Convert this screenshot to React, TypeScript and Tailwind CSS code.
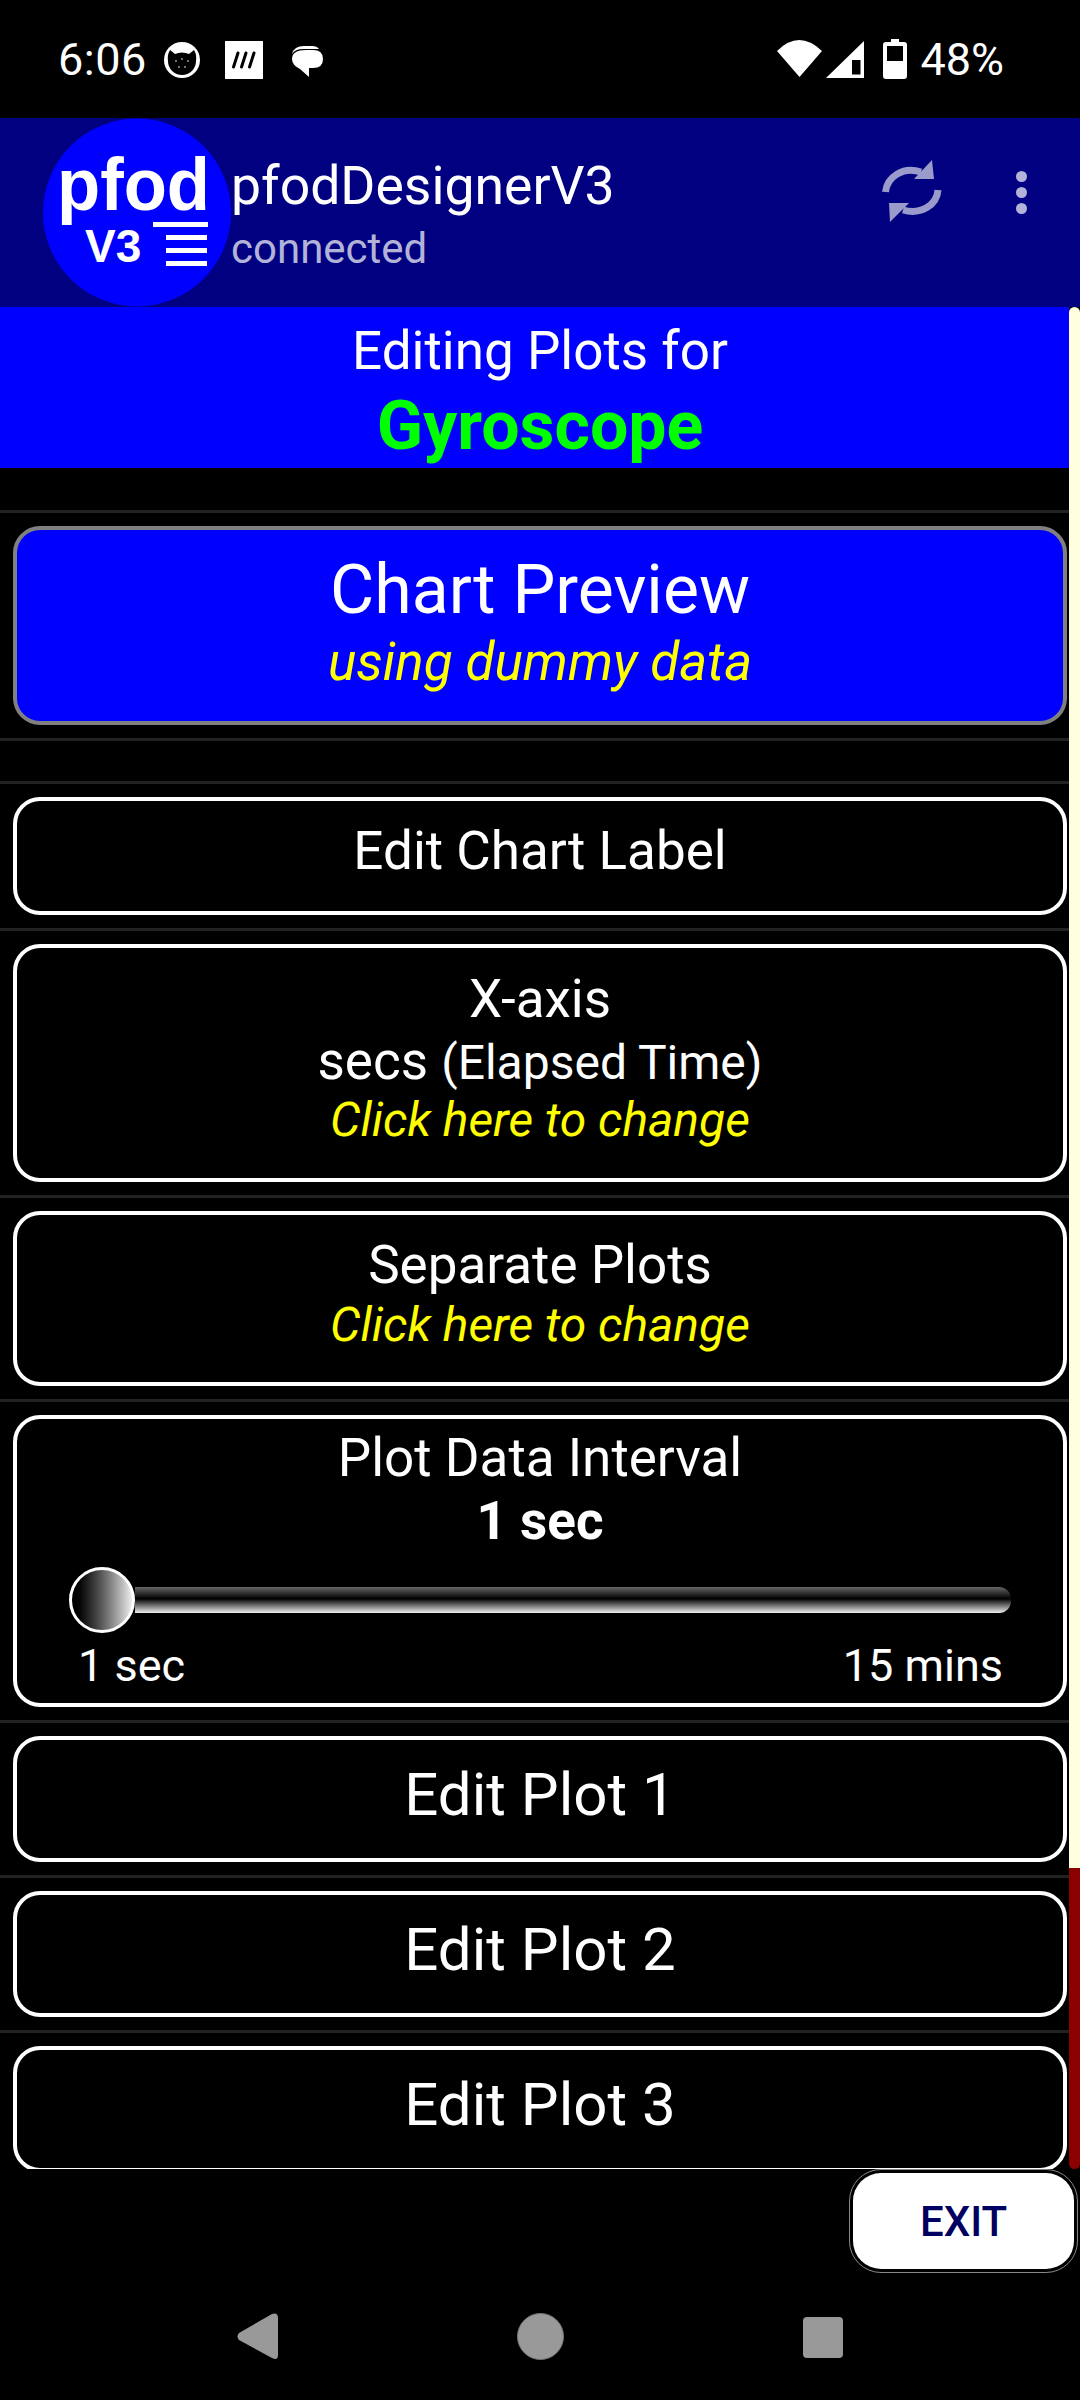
import type { ReactNode } from 'react';

const roboto = 'font-["Roboto",sans-serif]';

function StatusBar(): JSX.Element {
  return (
    <div className={`flex h-[118px] items-start bg-black pl-[58px] pr-[76px] pt-[37px] text-white ${roboto}`}>
      <span className="w-[86px] text-[45px] leading-[46px] tracking-[0.5px]">6:06</span>
      {/* cat face notification */}
      <svg className="ml-[20px] mt-[5px]" width="36" height="36" viewBox="0 0 36 36">
        <circle cx="18" cy="18" r="18" fill="#fff" />
        <path d="M6 8 L11 12 Q18 9 25 12 L30 8 Q33 13 32 19 A14 14 0 0 1 4 19 Q3 13 6 8 Z" fill="#000" />
        <circle cx="12" cy="19" r="1" fill="#999" />
        <circle cx="18" cy="17" r="1" fill="#999" />
        <circle cx="24" cy="19" r="1" fill="#999" />
        <circle cx="15" cy="25" r="1" fill="#999" />
        <circle cx="21" cy="25" r="1" fill="#999" />
      </svg>
      <svg className="ml-[25px] mt-[4px]" width="38" height="38" viewBox="0 0 38 38">
        <rect width="38" height="38" fill="#fff" />
        <path d="M13 12 L8.500 26 M21 12 L16.500 26 M29 12 L24.500 26" stroke="#000" strokeWidth="3" strokeLinecap="round" />
      </svg>
      <svg className="ml-[27px] mt-[8px]" width="33" height="33" viewBox="0 0 33 33">
        <path d="M2 9 Q4 1 14 1 H22 Q27 1 29 4 H13 Q5 4 2 9 Z" fill="#fff" />
        <path d="M16 5 H23 Q33 5 33 14 Q33 23 23 23 H19 V32 L10 24 Q2 20 2 14 Q2 5 16 5 Z" fill="#fff" />
      </svg>
      <div className="ml-auto flex items-start">
        <svg className="mt-[3px]" width="45" height="37" viewBox="0 0 45 37">
          <path d="M0 11 Q22 -11 45 11 L22.500 37 Z" fill="#fff" />
        </svg>
        <svg className="ml-[4px] mt-[4px]" width="38" height="37" viewBox="0 0 38 37">
          <path d="M38 0 V37 H0 Z" fill="#fff" />
          <path d="M26 19 H34.500 V33.500 H26 Z" fill="#000" />
        </svg>
        <svg className="ml-[19px] mt-[2px]" width="24" height="40" viewBox="0 0 24 40">
          <path d="M8 0 H16 V3 H21 Q24 3 24 6 V37 Q24 40 21 40 H3 Q0 40 0 37 V6 Q0 3 3 3 H8 Z" fill="#fff" />
          <rect x="4" y="7" width="16" height="15" fill="#000" />
        </svg>
        <span className="ml-[13px] text-[45px] leading-[46px]">48%</span>
      </div>
    </div>
  );
}

function Logo(): JSX.Element {
  return (
    <svg className="shrink-0" width="188" height="189" viewBox="0 0 188 189">
      <circle cx="94" cy="94.500" r="94" fill="#0000ff" />
      <text x="14" y="92" fill="#fff" fontFamily="Liberation Sans" fontWeight="700" fontSize="74" textLength="153" lengthAdjust="spacingAndGlyphs">
        pfod
      </text>
      <text x="42" y="144" fill="#fff" fontFamily="Liberation Sans" fontWeight="700" fontSize="46">
        V3
      </text>
      <rect x="110" y="104" width="55" height="5" fill="#fff" />
      <rect x="123" y="117" width="41" height="5" fill="#fff" />
      <rect x="123" y="130" width="41" height="5" fill="#fff" />
      <rect x="123" y="143" width="41" height="5" fill="#fff" />
    </svg>
  );
}

function AppBar(): JSX.Element {
  return (
    <div className={`flex h-[189px] items-start bg-[#000080] pl-[43px] ${roboto}`}>
      <Logo />
      <div className="flex flex-col pt-[37px]">
        <span className="text-[53.500px] leading-[62px] text-white">pfodDesignerV3</span>
        <span className="mt-[7px] text-[42px] leading-[50px] text-[#b3b3d9]">connected</span>
      </div>
      <svg className="ml-auto mt-[42px]" width="60" height="63" viewBox="0 0 60 63" fill="none">
        <path d="M3.500 32 C5 17 21 6 39 12" stroke="#9a9acb" strokeWidth="7" />
        <path d="M50 0 L52 19 L32 19 Z" fill="#9a9acb" />
        <path d="M56 30 C55 45 39 55 21 50" stroke="#9a9acb" strokeWidth="7" />
        <path d="M8 62 L7 43 L27 43 Z" fill="#9a9acb" />
      </svg>
      <div className="ml-[74px] mr-[53px] mt-[53px] flex flex-col gap-[5px]">
        <span className="h-[11px] w-[11px] rounded-full bg-[#b3b3d9]" />
        <span className="h-[11px] w-[11px] rounded-full bg-[#b3b3d9]" />
        <span className="h-[11px] w-[11px] rounded-full bg-[#b3b3d9]" />
      </div>
    </div>
  );
}

function Row({ children }: { children: ReactNode }): JSX.Element {
  return <div className="border-t-[3px] border-[#222222] py-[13px] pl-[13px] pr-[2px]">{children}</div>;
}

function Card({ className, children }: { className: string; children: ReactNode }): JSX.Element {
  return (
    <div className={`flex flex-col items-center rounded-[27px] border-[4px] border-white bg-black text-white ${className}`}>
      {children}
    </div>
  );
}

function ChangeHint({ className = '' }: { className?: string }): JSX.Element {
  return <span className={`text-[48px] italic leading-[56px] text-[#ffff00] ${className}`}>Click here to change</span>;
}

function IntervalSlider(): JSX.Element {
  return (
    <div className="mt-[15px] flex w-full items-center pl-[52px] pr-[52px]">
      <div className="h-[66px] w-[66px] shrink-0 rounded-full border-[3px] border-white bg-gradient-to-r from-black to-[#eeeeee]" />
      <div className="h-[26px] flex-1 rounded-r-[12px] bg-[linear-gradient(to_bottom,#666666,#000000_45%,#eeeeee)]" />
    </div>
  );
}

function PlotList(): JSX.Element {
  return (
    <div className={`min-w-0 flex-1 ${roboto}`}>
      {/* title text centres on the full screen width, the scrollbar sits over the band */}
      <div className="flex h-[161px] flex-col items-center bg-[#0000ff] pl-[11px]">
        <span className="mt-[13px] text-[53px] leading-[62px] text-white">Editing Plots for</span>
        <span className="mt-[7px] text-[68px] font-bold leading-[74px] text-[#00ff00]">Gyroscope</span>
      </div>
      <div className="h-[42px]" />
      <Row>
        <div className="flex h-[199px] flex-col items-center rounded-[27px] border-[4px] border-[#808080] bg-[#0000ff] pt-[21px] text-white">
          <span className="text-[68px] leading-[78px]">Chart Preview</span>
          <span className="mt-[3px] text-[53px] italic leading-[60px] text-[#ffff00]">using dummy data</span>
        </div>
      </Row>
      <div className="h-[43px] border-t-[3px] border-[#222222]" />
      <Row>
        <Card className="h-[118px] pt-[19px]">
          <span className="text-[53px] leading-[62px]">Edit Chart Label</span>
        </Card>
      </Row>
      <Row>
        <Card className="h-[238px] pt-[20px]">
          <span className="text-[53px] leading-[62px]">X-axis</span>
          <span className="text-[53px] leading-[62px]">
            secs <span className="text-[48px] leading-[50px]">(Elapsed Time)</span>
          </span>
          <ChangeHint />
        </Card>
      </Row>
      <Row>
        <Card className="h-[175px] pt-[19px]">
          <span className="text-[53px] leading-[62px]">Separate Plots</span>
          <ChangeHint className="mt-[1px]" />
        </Card>
      </Row>
      <Row>
        <Card className="h-[292px] pt-[8px]">
          <span className="text-[53px] leading-[62px]">Plot Data Interval</span>
          <span className="mt-[1px] text-[53px] font-bold leading-[62px]">1 sec</span>
          <IntervalSlider />
          <div className="mt-[7px] flex w-full justify-between pl-[61px] pr-[60px] text-[45px] leading-[52px]">
            <span>1 sec</span>
            <span>15 mins</span>
          </div>
        </Card>
      </Row>
      <Row>
        <Card className="h-[126px] pt-[20px]">
          <span className="text-[60px] leading-[70px]">Edit Plot 1</span>
        </Card>
      </Row>
      <Row>
        <Card className="h-[126px] pt-[20px]">
          <span className="text-[60px] leading-[70px]">Edit Plot 2</span>
        </Card>
      </Row>
      <Row>
        <Card className="h-[126px] pt-[20px]">
          <span className="text-[60px] leading-[70px]">Edit Plot 3</span>
        </Card>
      </Row>
    </div>
  );
}

function NavBar(): JSX.Element {
  return (
    <div className="flex justify-center gap-[239px] pt-[40px]">
      <svg width="41" height="47" viewBox="0 0 41 47">
        <path d="M35 1 Q41 -1 41 5 V42 Q41 48 35 45 L2 27 Q-1 23.500 2 20 Z" fill="#999999" />
      </svg>
      <span className="h-[47px] w-[47px] rounded-full border border-[#777777] bg-[#999999]" />
      <span className="mt-[4px] h-[41px] w-[40px] rounded-[4px] bg-[#999999]" />
    </div>
  );
}

export default function App(): JSX.Element {
  return (
    <div className="h-[2400px] w-[1080px] overflow-hidden bg-black">
      <StatusBar />
      <AppBar />
      <div className="flex h-[1862px] overflow-hidden">
        <PlotList />
        <div className="flex w-[11px] shrink-0 flex-col">
          <div className="h-[1561px] rounded-t-[6px] bg-[#ffffe0]" />
          <div className="flex-1 rounded-b-[6px] bg-[#8b0000]" />
        </div>
      </div>
      <div className="flex justify-end pr-[2px]">
        <div className="h-[104px] w-[229px] rounded-[32px] border border-[#888888] bg-black p-[3px]">
          <div className="flex h-full items-center justify-center rounded-[28px] bg-white">
            <span className={`text-[42px] font-medium text-[#000060] ${roboto}`}>EXIT</span>
          </div>
        </div>
      </div>
      <NavBar />
    </div>
  );
}
